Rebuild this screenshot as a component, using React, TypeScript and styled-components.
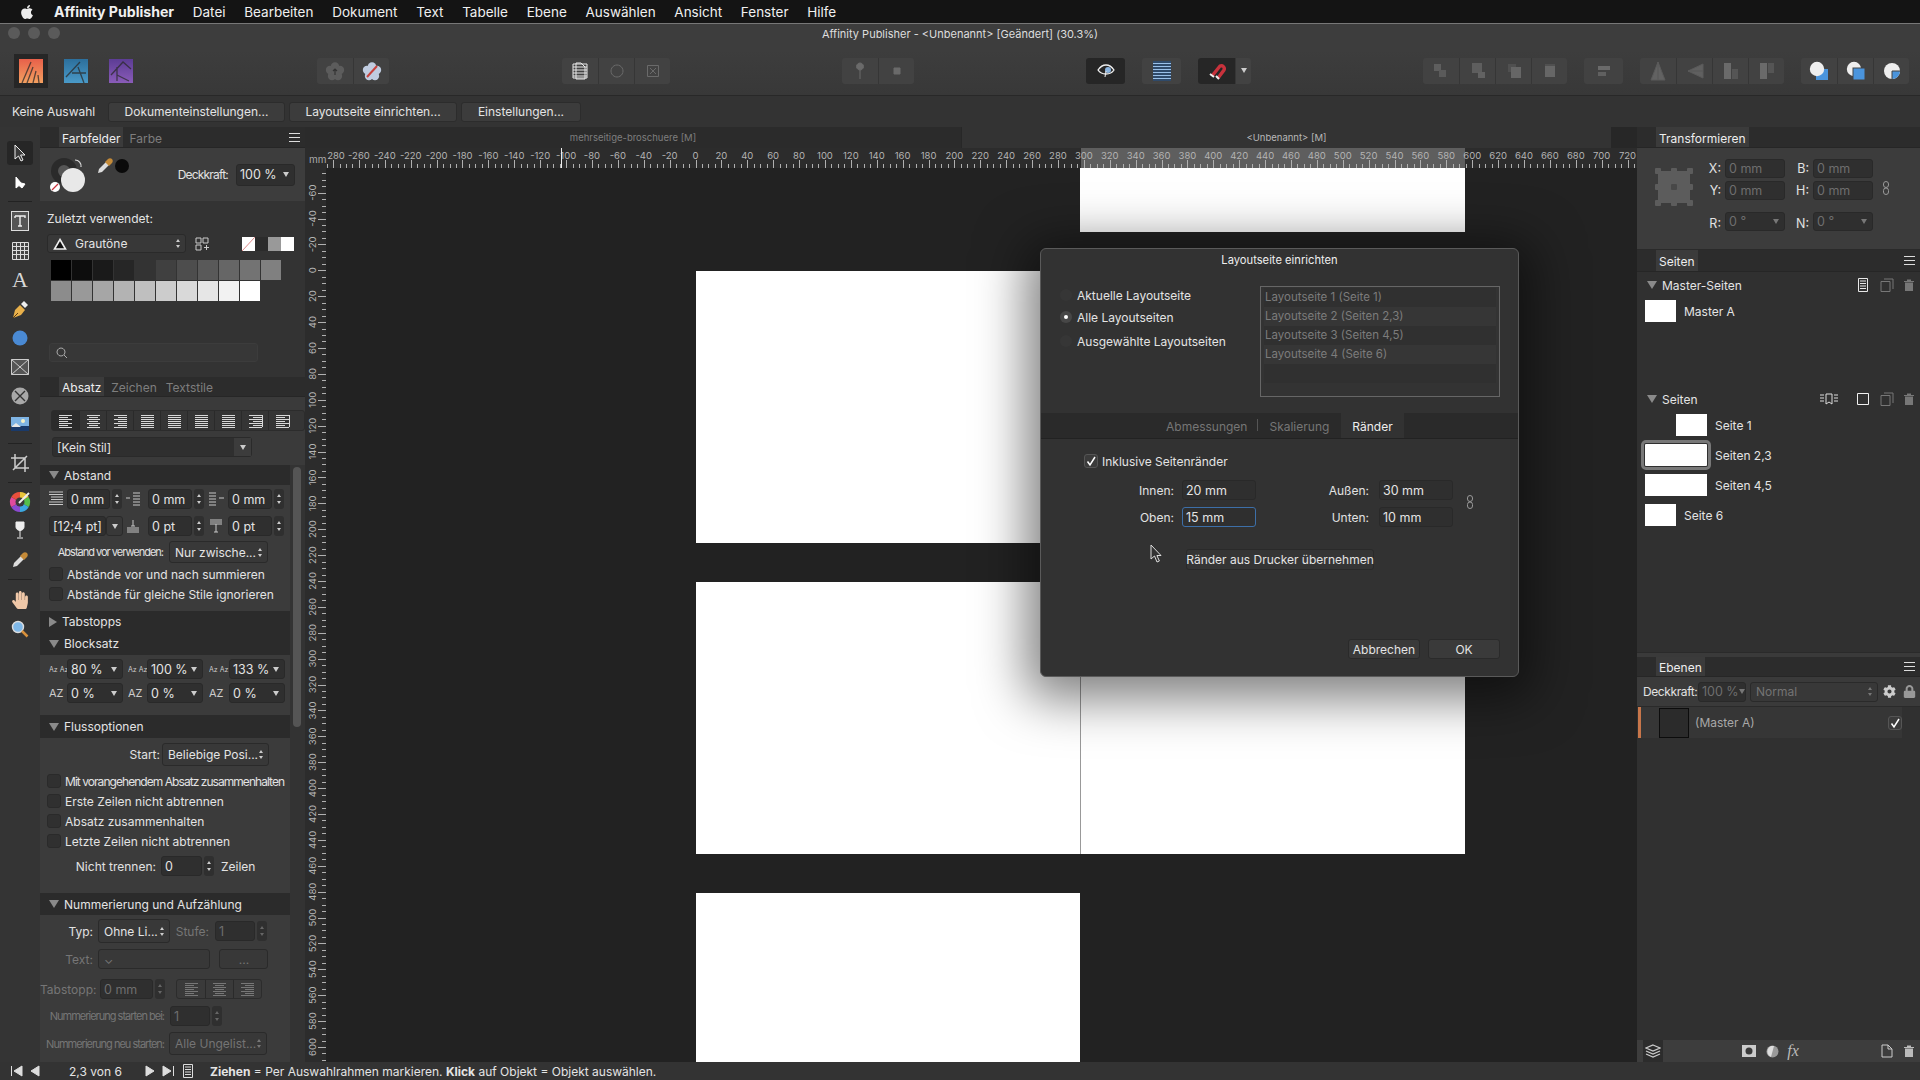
import React from 'react';
import styled, { createGlobalStyle, css } from 'styled-components';
import { FaHandPaper, FaCog, FaLock, FaApple } from 'react-icons/fa';

const GlobalStyle = createGlobalStyle`
  html, body { margin: 0; padding: 0; background: #222; }
  * { box-sizing: border-box; }
  body { font-family: Inter, "Liberation Sans", sans-serif; font-size: 12px; color: #e4e4e4; }
`;

const MM = 25.89 / 20;

const Screen = styled.div`
  position: relative;
  width: 1920px;
  height: 1080px;
  overflow: hidden;
  display: flex;
  flex-direction: column;
`;

const MenuBar = styled.div`
  height: 24px;
  flex: none;
  background: #141414;
  border-bottom: 1px solid #777;
  display: flex;
  align-items: center;
  padding-left: 19px;
  color: #f0f0f0;
`;

const MenuItem = styled.span<{ $bold?: boolean }>`
  margin-left: ${p => (p.$bold ? 19 : 18.7)}px;
  font-weight: ${p => (p.$bold ? 700 : 400)};
  font-size: ${p => (p.$bold ? 14.1 : 13.5)}px;
  white-space: nowrap;
`;

const TitleBar = styled.div`
  position: relative;
  height: 26px;
  flex: none;
  background: #3d3d3d;
  display: flex;
  align-items: center;
  justify-content: center;
  padding-bottom: 6px;
  font-size: 11px;
  color: #ddd;
`;

const Lights = styled.div`
  position: absolute;
  left: 8px;
  top: 3px;
  display: flex;
  gap: 8px;
`;

const Light = styled.span`
  width: 12px;
  height: 12px;
  border-radius: 50%;
  background: #5a5a5a;
`;

const Toolbar = styled.div`
  height: 46px;
  flex: none;
  background: linear-gradient(#3d3d3d, #383838);
  border-bottom: 1px solid #282828;
  display: flex;
  align-items: center;
  padding-left: 14px;
  padding-bottom: 4px;
`;

const AppBox = styled.div<{ $active?: boolean; $ml?: number }>`
  width: ${p => (p.$active ? 34 : 24)}px;
  height: 34px;
  margin-left: ${p => p.$ml ?? 0}px;
  background: ${p => (p.$active ? '#262626' : 'transparent')};
  display: flex;
  align-items: center;
  justify-content: center;
`;

const ToolGroup = styled.div<{ $ml: number }>`
  margin-left: ${p => p.$ml}px;
  display: flex;
  height: 26px;
  border-radius: 3px;
  overflow: hidden;
  background: #424242;
`;

const ToolBtn = styled.div<{ $w?: number; $dark?: boolean }>`
  width: ${p => p.$w ?? 36}px;
  height: 26px;
  display: flex;
  align-items: center;
  justify-content: center;
  background: ${p => (p.$dark ? '#262626' : 'transparent')};
  & + & { border-left: 1px solid #363636; }
`;

const ContextBar = styled.div`
  height: 31px;
  flex: none;
  background: #333;
  display: flex;
  align-items: center;
  padding-left: 12px;
`;

const ContextLabel = styled.span`
  width: 81px;
  flex: none;
  white-space: nowrap;
`;

const CtxButton = styled.div<{ $w: number; $ml?: number }>`
  width: ${p => p.$w}px;
  height: 20px;
  margin-left: ${p => p.$ml ?? 4}px;
  background: #3c3c3c;
  border: 1px solid #2c2c2c;
  border-radius: 3px;
  display: flex;
  align-items: center;
  justify-content: center;
  white-space: nowrap;
`;

const Main = styled.div`
  flex: 1;
  min-height: 0;
  display: flex;
`;

const ToolColumn = styled.div`
  width: 40px;
  flex: none;
  background: #343434;
  display: flex;
  flex-direction: column;
  align-items: center;
  padding-top: 14px;
`;

const ToolSlot = styled.div<{ $active?: boolean; $h?: number }>`
  width: 26px;
  height: ${p => p.$h ?? 29}px;
  flex: none;
  display: flex;
  align-items: center;
  justify-content: center;
  border-radius: 3px;
  background: ${p => (p.$active ? '#262626' : 'transparent')};
`;

const ToolSep = styled.div<{ $first?: boolean }>`
  width: 24px;
  height: 1px;
  flex: none;
  margin: ${p => (p.$first ? '0 0 4px' : '5px 0')};
  background: #222;
`;

const SerifA = styled.span`
  font-family: "Liberation Serif", serif;
  font-size: 22px;
  color: #d8d8d8;
`;

const LeftPanel = styled.div`
  width: 265px;
  flex: none;
  background: #333;
  display: flex;
  flex-direction: column;
`;

const TabRow = styled.div<{ $h?: number }>`
  height: ${p => p.$h ?? 21}px;
  flex: none;
  background: #2c2c2c;
  border-bottom: 1px solid #262626;
  display: flex;
  align-items: flex-end;
  padding-left: 19px;
  position: relative;
`;

const PanelTab = styled.div<{ $on?: boolean; $ml?: number }>`
  height: 100%;
  padding: 2px 3px 0;
  margin-left: ${p => p.$ml ?? 0}px;
  display: flex;
  align-items: center;
  background: ${p => (p.$on ? '#3b3b3b' : 'transparent')};
  color: ${p => (p.$on ? '#eee' : '#7e7e7e')};
  white-space: nowrap;
`;

const MenuGlyph = styled.div`
  margin-left: auto;
  margin-right: 5px;
  align-self: center;
  width: 11px;
  height: 9px;
  border-top: 1px solid #ddd;
  border-bottom: 1px solid #ddd;
  position: relative;
  &::before {
    content: '';
    position: absolute;
    left: 0;
    right: 0;
    top: 3px;
    height: 1px;
    background: #ddd;
  }
`;

const ColorHead = styled.div`
  height: 53px;
  flex: none;
  background: #3d3d3d;
  display: flex;
  align-items: center;
  padding: 0 10px 0 9px;
`;

const DropperSlot = styled.div`
  display: flex;
  align-items: center;
  margin: 0 0 17px 10px;
  gap: 1px;
`;

const PlainLabel = styled.span<{ $tight?: boolean; $dim?: boolean; $w?: number; $ml?: number }>`
  white-space: nowrap;
  margin-left: ${p => p.$ml ?? 0}px;
  color: ${p => (p.$dim ? '#767676' : '#e2e2e2')};
  ${p => p.$w && css`width: ${p.$w}px; flex: none; text-align: right;`}
  ${p => p.$tight && css`letter-spacing: -0.95px;`}
`;

const SqueezedLabel = styled(PlainLabel)`
  font-size: 11px;
  letter-spacing: -1px;
`;

const OpacityLabel = styled(PlainLabel)`
  margin-left: auto;
  letter-spacing: -0.8px;
`;

const Field = styled.div<{ $w: number; $h?: number; $ml?: number; $dim?: boolean; $focus?: boolean }>`
  width: ${p => p.$w}px;
  height: ${p => p.$h ?? 20}px;
  flex: none;
  margin-left: ${p => p.$ml ?? 0}px;
  padding: 0 3px;
  display: flex;
  align-items: center;
  background: #2f2f2f;
  border: 1px solid ${p => (p.$focus ? '#3d6fa8' : '#292929')};
  border-radius: 3px;
  color: ${p => (p.$dim ? '#6e6e6e' : '#e4e4e4')};
  font-size: 12.5px;
  white-space: nowrap;
  overflow: hidden;
`;

const DownMark = styled.i<{ $dim?: boolean; $flush?: boolean }>`
  margin-left: ${p => (p.$flush ? 0 : 'auto')};
  margin-right: ${p => (p.$flush ? 0 : 2)}px;
  flex: none;
  border-left: 3px solid transparent;
  border-right: 3px solid transparent;
  border-top: 5px solid ${p => (p.$dim ? '#777' : '#ccc')};
`;

const Stepper = styled.div<{ $dim?: boolean }>`
  width: 10px;
  height: 20px;
  flex: none;
  margin-left: 2px;
  background: #2f2f2f;
  border-radius: 3px;
  display: flex;
  flex-direction: column;
  align-items: center;
  justify-content: center;
  gap: 4px;
  &::before, &::after {
    content: '';
    border-left: 2.5px solid transparent;
    border-right: 2.5px solid transparent;
  }
  &::before { border-bottom: 3px solid ${p => (p.$dim ? '#666' : '#ccc')}; }
  &::after { border-top: 3px solid ${p => (p.$dim ? '#666' : '#ccc')}; }
`;

const Updown = styled.div<{ $dim?: boolean }>`
  margin-left: auto;
  margin-right: 1px;
  flex: none;
  display: flex;
  flex-direction: column;
  gap: 3px;
  &::before, &::after {
    content: '';
    border-left: 2.5px solid transparent;
    border-right: 2.5px solid transparent;
  }
  &::before { border-bottom: 3px solid ${p => (p.$dim ? '#777' : '#ccc')}; }
  &::after { border-top: 3px solid ${p => (p.$dim ? '#777' : '#ccc')}; }
`;

const Select = styled.div<{ $w: number; $h?: number; $ml?: number; $dim?: boolean; $center?: boolean }>`
  width: ${p => p.$w}px;
  height: ${p => p.$h ?? 22}px;
  flex: none;
  margin-left: ${p => p.$ml ?? 0}px;
  padding: 0 4px 0 5px;
  display: flex;
  align-items: center;
  justify-content: ${p => (p.$center ? 'center' : 'flex-start')};
  background: #383838;
  border: 1px solid #2a2a2a;
  border-radius: 3px;
  color: ${p => (p.$dim ? '#747474' : '#e4e4e4')};
  white-space: nowrap;
  overflow: hidden;
`;

const ColorBody = styled.div`
  height: 176px;
  flex: none;
  padding: 9px 0 0 7px;
  background: #333;
`;

const SwatchTools = styled.div`
  display: flex;
  align-items: center;
  margin-top: 8px;
`;

const SwatchName = styled.span`
  margin-left: 8px;
`;

const GridIcon = styled.div`
  display: flex;
  margin-left: 8px;
`;

const SwatchGrid = styled.div`
  margin: 7px 0 42px 4px;
  display: grid;
  grid-template-columns: repeat(11, 20px);
  grid-auto-rows: 20px;
  gap: 1px;
`;

const Swatch = styled.span<{ $c: string }>`
  background: ${p => p.$c};
`;

const MiniSwatches = styled.div`
  margin-left: 32px;
  display: flex;
  height: 14px;
`;

const MiniSwatch = styled.span<{ $c: string }>`
  width: 13px;
  background: ${p => p.$c};
`;

const Search = styled.div`
  width: 209px;
  height: 19px;
  margin-left: 2px;
  padding-left: 6px;
  background: #373737;
  border: 1px solid #3c3c3c;
  border-radius: 3px;
  display: flex;
  align-items: center;
`;

const AlignBody = styled.div`
  height: 68px;
  flex: none;
  background: #3a3a3a;
  padding: 13px 0 0 11px;
`;

const AlignGroup = styled.div<{ $ml?: number; $n: number; $w: number; $h?: number; $dim?: boolean }>`
  display: grid;
  grid-template-columns: repeat(${p => p.$n}, ${p => p.$w}px);
  height: ${p => p.$h ?? 21}px;
  margin-left: ${p => p.$ml ?? 0}px;
  background: ${p => (p.$dim ? '#3a3a3a' : '#353535')};
  border: 1px solid #2c2c2c;
  border-radius: 3px;
  & > div + div { border-left: 1px solid #2a2a2a; }
`;

const AlignCell = styled.div<{ $on?: boolean }>`
  display: flex;
  align-items: center;
  justify-content: center;
  background: ${p => (p.$on ? '#2b2b2b' : 'transparent')};
`;

const StyleSelect = styled.div`
  width: 200px;
  height: 20px;
  margin: 6px 0 0 1px;
  display: flex;
  background: #2f2f2f;
  border: 1px solid #2a2a2a;
  border-radius: 3px;
  align-items: center;
  padding-left: 4px;
`;

const StyleArrow = styled.div`
  margin-left: auto;
  width: 17px;
  height: 100%;
  background: #3c3c3c;
  display: flex;
  align-items: center;
  justify-content: center;
`;

const ScrollArea = styled.div`
  flex: 1;
  min-height: 0;
  display: flex;
`;

const ScrollContent = styled.div`
  width: 250px;
  flex: none;
`;

const ScrollTrack = styled.div`
  flex: 1;
  padding: 2px 4px 0 3px;
`;

const ScrollThumb = styled.div`
  height: 260px;
  border-radius: 4px;
  background: #555;
`;

const Header = styled.div<{ $h?: number }>`
  height: ${p => p.$h ?? 22}px;
  background: #2b2b2b;
  display: flex;
  align-items: center;
  padding-left: 9px;
  gap: 5px;
`;

const Tri = styled.i<{ $closed?: boolean }>`
  width: 0;
  height: 0;
  flex: none;
  ${p => (p.$closed
    ? css`border-top: 5px solid transparent; border-bottom: 5px solid transparent; border-left: 8px solid #8a8a8a;`
    : css`border-left: 5px solid transparent; border-right: 5px solid transparent; border-top: 8px solid #8a8a8a;`)}
`;

const Body = styled.div<{ $h: number; $pt: number }>`
  height: ${p => p.$h}px;
  padding-top: ${p => p.$pt}px;
  background: #3b3b3b;
`;

const Row = styled.div<{ $mt?: number; $h?: number; $pl?: number; $gap?: number }>`
  display: flex;
  align-items: center;
  height: ${p => p.$h ?? 20}px;
  margin-top: ${p => p.$mt ?? 0}px;
  padding-left: ${p => p.$pl ?? 0}px;
  gap: ${p => p.$gap ?? 0}px;
`;

const Cells = styled.div<{ $mt?: number; $cols: string }>`
  display: grid;
  grid-template-columns: ${p => p.$cols};
  margin-top: ${p => p.$mt ?? 0}px;
  padding-left: 9px;
  height: 20px;
`;

const Cell = styled.div`
  display: flex;
  align-items: center;
`;

const MetricGlyph = styled.span<{ $small?: boolean; $w: number }>`
  width: ${p => p.$w}px;
  flex: none;
  font-size: ${p => (p.$small ? 7 : 11)}px;
  color: #ccc;
  white-space: nowrap;
  overflow: hidden;
`;

const CheckRow = styled.div<{ $mt?: number; $pl: number }>`
  display: flex;
  align-items: center;
  gap: 4px;
  height: 14px;
  margin-top: ${p => p.$mt ?? 0}px;
  padding-left: ${p => p.$pl}px;
  white-space: nowrap;
`;

const CheckBox = styled.span<{ $on?: boolean; $push?: boolean }>`
  width: 14px;
  height: 14px;
  flex: none;
  border-radius: 3px;
  background: ${p => (p.$on ? '#3b3b3b' : '#303030')};
  border: 1px solid ${p => (p.$on ? '#555' : '#2a2a2a')};
  display: flex;
  align-items: center;
  justify-content: center;
  color: #fff;
  ${p => p.$push && css`margin-left: auto;`}
`;

const Center = styled.div`
  flex: 1;
  min-width: 0;
  display: flex;
  flex-direction: column;
`;

const DocTabs = styled.div`
  height: 21px;
  flex: none;
  display: flex;
  font-size: 9.5px;
  color: #8a8a8a;
  background: #272727;
`;

const DocTab = styled.div<{ $w: number; $on?: boolean }>`
  width: ${p => p.$w}px;
  flex: none;
  display: flex;
  align-items: center;
  justify-content: center;
  background: ${p => (p.$on ? '#333' : '#2b2b2b')};
  color: ${p => (p.$on ? '#b8b8b8' : '#7e7e7e')};
  margin-right: 1px;
`;

const RulerSvg = styled.svg`
  display: block;
  flex: none;
  background: #2c2c2c;
  font-family: Inter, "Liberation Sans", sans-serif;
`;

const CanvasRow = styled.div`
  flex: 1;
  min-height: 0;
  display: flex;
`;

const Canvas = styled.div`
  position: relative;
  flex: 1;
  overflow: hidden;
  background: #222;
`;

const Page = styled.div<{ $x: number; $y: number; $w: number; $h: number }>`
  position: absolute;
  left: ${p => p.$x}px;
  top: ${p => p.$y}px;
  width: ${p => p.$w}px;
  height: ${p => p.$h}px;
  background: #fff;
`;

const Fold = styled.div`
  position: absolute;
  left: 384px;
  top: 0;
  bottom: 0;
  width: 1px;
  background: #999;
`;

const RightPanel = styled.div`
  width: 283px;
  flex: none;
  background: #303030;
  display: flex;
  flex-direction: column;
`;

const TransformBody = styled.div`
  height: 102px;
  flex: none;
  background: #3c3c3c;
  border-bottom: 1px solid #2a2a2a;
  display: flex;
  padding: 11px 0 0 18px;
`;

const AnchorSlot = styled.div`
  margin-top: 9px;
`;

const TransformGrid = styled.div`
  margin-left: 13px;
  display: grid;
  grid-template-columns: 15px 60px 20px 60px;
  grid-template-rows: 19px 19px 28px;
  column-gap: 4px;
  row-gap: 3px;
  align-items: center;
  & > *:nth-child(n + 9) { align-self: end; }
`;

const TfLabel = styled.span`
  text-align: right;
  color: #e2e2e2;
  font-size: 12.5px;
`;

const ChainSlot = styled.div`
  margin: 22px 0 0 10px;
`;

const SectionHead = styled.div<{ $mt?: number }>`
  height: 22px;
  margin-top: ${p => p.$mt ?? 2}px;
  display: flex;
  align-items: center;
  padding-left: 10px;
  gap: 5px;
`;

const HeadIcons = styled.div`
  margin-left: auto;
  display: flex;
  align-items: center;
  gap: 8px;
  padding-right: 4px;
`;

const IconGap = styled.span`
  display: flex;
  margin-right: 2px;
`;

const BookmarkGap = styled.span`
  display: flex;
  margin-right: 10px;
`;

const PageRow = styled.div<{ $mt?: number }>`
  height: 22px;
  display: flex;
  align-items: center;
  padding-left: 8px;
  margin-top: ${p => p.$mt ?? 8}px;
`;

const Thumb = styled.div<{ $wide?: boolean; $sel?: boolean; $ml?: number }>`
  width: ${p => (p.$wide ? 62 : 31)}px;
  height: 22px;
  flex: none;
  background: #fff;
  margin-left: ${p => p.$ml ?? 0}px;
  margin-right: 8px;
  ${p => p.$sel && css`outline: 3px solid #787878; outline-offset: 1px; border-radius: 1px;`}
`;

const PagesBody = styled.div`
  height: 380px;
  flex: none;
  background: #303030;
`;

const Divider = styled.div`
  height: 5px;
  flex: none;
  background: #3a3a3a;
  border-top: 1px solid #2a2a2a;
`;

const LayerControls = styled.div`
  height: 30px;
  flex: none;
  background: #3a3a3a;
  border-bottom: 1px solid #2a2a2a;
  display: flex;
  align-items: center;
  padding-left: 6px;
`;

const LayerLabel = styled(PlainLabel)`
  width: 55px;
  flex: none;
  letter-spacing: -0.4px;
`;

const LayerRow = styled.div`
  height: 31px;
  flex: none;
  background: #363636;
  display: flex;
  align-items: center;
  border-left: 3px solid #c8764a;
  margin-left: 1px;
  padding-left: 18px;
  color: #a8a8a8;
  margin-right: 18px;
`;

const LayerThumb = styled.div`
  width: 30px;
  height: 30px;
  background: #2b2b2b;
  border: 1px solid #0c0c0c;
  margin-right: 6px;
`;

const LayersSpace = styled.div`
  flex: 1;
`;

const LayersFoot = styled.div`
  height: 22px;
  flex: none;
  background: #3d3d3d;
  display: flex;
  align-items: center;
  padding-left: 6px;
`;

const FootSlot = styled.div<{ $ml?: number; $on?: boolean }>`
  width: 20px;
  height: 22px;
  flex: none;
  margin-left: ${p => p.$ml ?? 0}px;
  display: flex;
  align-items: center;
  justify-content: center;
  background: ${p => (p.$on ? '#2c2c2c' : 'transparent')};
`;

const FxText = styled.span`
  font-family: "Liberation Serif", serif;
  font-style: italic;
  font-size: 16px;
  color: #bbb;
`;

const StatusBar = styled.div`
  height: 18px;
  flex: none;
  background: #333;
  display: flex;
  align-items: center;
  padding-left: 10px;
`;

const StatusIcon = styled.span<{ $ml?: number }>`
  display: flex;
  margin-left: ${p => p.$ml ?? 0}px;
`;

const StatusPage = styled.span`
  margin: 0 14px 0 27px;
  width: 60px;
  white-space: nowrap;
`;

const StatusHint = styled.span`
  margin-left: 15px;
  white-space: nowrap;
  & b { font-weight: 700; }
`;

const Dialog = styled.div`
  position: absolute;
  left: 1040px;
  top: 248px;
  width: 479px;
  height: 429px;
  background: #323232;
  border: 1px solid #5a5a5a;
  border-radius: 6px;
  box-shadow: 0 8px 50px 14px rgba(0, 0, 0, 0.5);
  display: flex;
  flex-direction: column;
`;

const DialogTitle = styled.div`
  height: 21px;
  flex: none;
  display: flex;
  align-items: center;
  justify-content: center;
  font-size: 11.2px;
  color: #eee;
`;

const ScopeRow = styled.div`
  height: 143px;
  flex: none;
  display: flex;
  padding: 16px 0 0 19px;
`;

const RadioColumn = styled.div`
  width: 200px;
  flex: none;
  padding-top: 1px;
`;

const RadioRow = styled.div<{ $mt?: number }>`
  display: flex;
  align-items: center;
  gap: 5px;
  height: 16px;
  margin-top: ${p => p.$mt ?? 0}px;
`;

const Radio = styled.span<{ $on?: boolean }>`
  width: 12px;
  height: 12px;
  border-radius: 50%;
  background: ${p => (p.$on ? '#474747' : '#363636')};
  display: flex;
  align-items: center;
  justify-content: center;
  &::after {
    content: '';
    width: 4px;
    height: 4px;
    border-radius: 50%;
    background: ${p => (p.$on ? '#fff' : 'transparent')};
  }
`;

const PageList = styled.div`
  width: 240px;
  height: 111px;
  border: 1px solid #666;
  padding: 1px 3px;
  background: #333;
`;

const PageListRow = styled.div<{ $odd?: boolean }>`
  height: 19px;
  line-height: 19px;
  font-size: 11.5px;
  color: #7c7c7c;
  padding-left: 1px;
  background: ${p => (p.$odd ? '#303030' : '#363636')};
`;

const DialogTabs = styled.div`
  height: 26px;
  flex: none;
  background: #2a2a2a;
  border-bottom: 1px solid #222;
  display: flex;
  align-items: stretch;
  padding-left: 114px;
`;

const DialogTab = styled.div<{ $on?: boolean; $sep?: boolean; $ml?: number }>`
  display: flex;
  align-items: center;
  padding: 1px 11px 0;
  margin-left: ${p => p.$ml ?? 0}px;
  color: ${p => (p.$on ? '#eee' : '#767676')};
  background: ${p => (p.$on ? '#323232' : 'transparent')};
  ${p => p.$sep && css`
    position: relative;
    &::after {
      content: '';
      position: absolute;
      right: 0;
      top: 6px;
      bottom: 7px;
      width: 1px;
      background: #555;
    }
  `}
`;

const DialogBody = styled.div`
  flex: 1;
  position: relative;
  padding: 15px 0 0 43px;
`;

const FormRow = styled.div<{ $mt: number }>`
  display: flex;
  align-items: center;
  margin-top: ${p => p.$mt}px;
  height: 20px;
`;

const ChainFloat = styled.div`
  position: absolute;
  left: 426px;
  top: 56px;
`;

const WideButton = styled.div`
  width: 188px;
  height: 21px;
  margin: 22px 0 0 102px;
  background: #353535;
  border: 1px solid #2a2a2a;
  border-radius: 3px;
  display: flex;
  align-items: center;
  justify-content: center;
  white-space: nowrap;
`;

const DialogFoot = styled.div`
  display: flex;
  justify-content: flex-end;
  gap: 8px;
  margin-top: 69px;
  margin-right: 18px;
`;

const DialogButton = styled.div`
  width: 72px;
  height: 20px;
  background: #3a3a3a;
  border: 1px solid #2a2a2a;
  border-radius: 3px;
  display: flex;
  align-items: center;
  justify-content: center;
`;

const CursorFloat = styled.div`
  position: absolute;
  left: 109px;
  top: 105px;
`;

/* ---- drawings ---- */

const AppIcon = ({ c1, c2, lines }: { c1: string; c2: string; lines: string }) => (
  <svg width="24" height="24" viewBox="0 0 24 24">
    <defs>
      <linearGradient id={`g${c1.slice(1)}`} x1="0" y1="0" x2="0" y2="1">
        <stop offset="0" stopColor={c1} />
        <stop offset="1" stopColor={c2} />
      </linearGradient>
    </defs>
    <rect width="24" height="24" fill={`url(#g${c1.slice(1)})`} />
    <path d={lines} stroke="#2a2a2a" strokeWidth="1.3" fill="none" opacity=".75" />
  </svg>
);

const Flower = ({ fill, slash, arrow }: { fill: string; slash?: boolean; arrow?: boolean }) => (
  <svg width="20" height="20" viewBox="0 0 20 20">
    <g fill={fill}>
      <circle cx="10" cy="5.5" r="4.2" />
      <circle cx="15" cy="9" r="4.2" />
      <circle cx="13" cy="15" r="4.2" />
      <circle cx="7" cy="15" r="4.2" />
      <circle cx="5" cy="9" r="4.2" />
      <circle cx="10" cy="10" r="4" />
    </g>
    {slash && <path d="M5 16L15 5" stroke="#c8423c" strokeWidth="2" />}
    {arrow && <path d="M10 14V8M8 10l2-2 2 2" stroke="#333" strokeWidth="1.2" fill="none" />}
  </svg>
);

const Gi = ({ d, w = 16, h = 16, c = '#ddd', sw = 1, fill = 'none' }: { d: string; w?: number; h?: number; c?: string; sw?: number; fill?: string }) => (
  <svg width={w} height={h} viewBox={`0 0 ${w} ${h}`}>
    <path d={d} stroke={c} strokeWidth={sw} fill={fill} />
  </svg>
);

const Blocks = ({ parts }: { parts: [number, number, number, number, string][] }) => (
  <svg width="22" height="20" viewBox="0 0 22 20">
    {parts.map((p, i) => <rect key={i} x={p[0]} y={p[1]} width={p[2]} height={p[3]} fill={p[4]} />)}
  </svg>
);

const lines = (n: number, kind: string) => {
  const out: string[] = [];
  for (let i = 0; i < n; i++) {
    const long = kind === 'just' || i % 2 === 0;
    const w = long ? 13 : 9;
    const x = kind === 'left' ? 1 : kind === 'right' ? 14 - w : kind === 'center' ? 7.5 - w / 2 : 1;
    out.push(`M${x} ${1.5 + i * 2}h${w}`);
  }
  return out.join('');
};

const AlignIcon = ({ kind, c = '#d8d8d8' }: { kind: string; c?: string }) => (
  <Gi w={15} h={14} d={lines(7, kind)} c={c} />
);

const SpaceIcon = ({ d }: { d: string }) => <Gi w={16} h={16} d={d} c="#c8c8c8" />;

const Chain = () => (
  <svg width="6" height="14" viewBox="0 0 6 14">
    <rect x=".5" y=".5" width="5" height="6" rx="2.5" fill="none" stroke="#999" />
    <rect x=".5" y="7" width="5" height="6.5" rx="2.5" fill="none" stroke="#999" />
  </svg>
);

const Check = () => (
  <svg width="12" height="12" viewBox="0 0 12 12">
    <path d="M2.5 6.5L5 10L10 2" stroke="#fff" strokeWidth="1.5" fill="none" />
  </svg>
);

const Trash = ({ c = '#777' }: { c?: string }) => (
  <svg width="14" height="14" viewBox="0 0 14 14">
    <path d="M2 3h10v1H2zM5 1.5h4V3H5zM3 4.5h8V13H3z" fill={c} />
  </svg>
);

const Dropper = () => (
  <svg width="18" height="18" viewBox="0 0 18 18">
    <path d="M2 16l1-4 7-7 3 3-7 7z" fill="#ddd" />
    <path d="M10 4l2-2c1-1 3-1 4 0s1 3 0 4l-2 2-1 1-4-4z" fill="#c48a38" />
  </svg>
);

const AnchorGrid = () => (
  <svg width="38" height="38" viewBox="0 0 38 38">
    <rect x="3" y="3" width="32" height="32" fill="#5c5c5c" />
    {[3, 19, 35].flatMap(x => [3, 19, 35].map(y => (
      <rect key={`${x}-${y}`} x={x - 3} y={y - 3} width="6" height="6" rx="1" fill={x === 19 && y === 19 ? '#484848' : '#5c5c5c'} />
    )))}
  </svg>
);

const ColorWheel = () => (
  <svg width="22" height="22" viewBox="0 0 22 22">
    <path d="M11 1a10 10 0 0 1 8.7 5L11 11z" fill="#e8c43c" />
    <path d="M19.7 6a10 10 0 0 1 0 10L11 11z" fill="#55c04a" />
    <path d="M19.7 16A10 10 0 0 1 11 21V11z" fill="#3ca8e0" />
    <path d="M11 21a10 10 0 0 1-8.7-5L11 11z" fill="#8a4ad0" />
    <path d="M2.3 16a10 10 0 0 1 0-10L11 11z" fill="#e04a9c" />
    <path d="M2.3 6A10 10 0 0 1 11 1v10z" fill="#e8503c" />
    <circle cx="11" cy="11" r="4.5" fill="#3a3a3a" />
    <path d="M10 12L20 2" stroke="#eee" strokeWidth="2" />
  </svg>
);

/* ---- data ---- */

const menus = ['Datei', 'Bearbeiten', 'Dokument', 'Text', 'Tabelle', 'Ebene', 'Auswählen', 'Ansicht', 'Fenster', 'Hilfe'];

const greys = ['#000', '#0d0d0d', '#1a1a1a', '#262626', '#333', '#404040', '#4d4d4d', '#595959', '#666', '#737373', '#808080',
  '#8c8c8c', '#999', '#a6a6a6', '#b3b3b3', '#bfbfbf', '#ccc', '#d9d9d9', '#e6e6e6', '#f2f2f2', '#fff'];

const hLabels: number[] = [];
for (let u = -260; u <= 720; u += 20) hLabels.push(u);
const vLabels: number[] = [];
for (let u = -60; u <= 600; u += 20) vLabels.push(u);

const TopRuler = () => {
  const zero = 390.5;
  let ticks = '';
  for (let u = -285; u <= 730; u += 5) {
    const x = Math.round(zero + u * MM) + 0.5;
    ticks += `M${x} 20v${u % 20 === 0 ? -8 : -4}`;
  }
  return (
    <RulerSvg width="1332" height="20" viewBox="0 0 1332 20">
      <rect x="776" width="384" height="20" fill="#5e5e5e" />
      <path d={ticks} stroke="#b0b0b0" strokeWidth="1" />
      <rect width="21" height="20" fill="#2c2c2c" />
      <text x="4" y="15" fontSize="10" fill="#aaa">mm</text>
      <text x="31" y="11" fontSize="9.5" textAnchor="middle" fill="#b4b4b4">280</text>
      {hLabels.map(u => (
        <text key={u} x={zero + u * MM} y="11" fontSize="9.5" textAnchor="middle" fill="#b4b4b4">{u}</text>
      ))}
      <path d="M256.5 0v20" stroke="#eee" />
    </RulerSvg>
  );
};

const LeftRuler = () => {
  const zero = 102.3;
  let ticks = '';
  for (let u = -100; u <= 640; u += 5) {
    const y = Math.round(zero + u * MM) + 0.5;
    ticks += `M21 ${y}h${u % 20 === 0 ? -8 : -4}`;
  }
  return (
    <RulerSvg width="21" height="894" viewBox="0 0 21 894">
      <path d={ticks} stroke="#b0b0b0" strokeWidth="1" />
      {vLabels.map(u => (
        <text key={u} transform={`translate(11 ${zero + u * MM}) rotate(-90)`} fontSize="9.5" textAnchor="middle" fill="#b4b4b4">{u}</text>
      ))}
    </RulerSvg>
  );
};

const ToolIcons = () => (
  <ToolColumn>
    <ToolSlot $active $h={24}><Gi w={14} h={18} d="M2 1v14l3.5-3 2.5 5 2-1-2.4-5H12z" c="#eee" fill="#3a3a3a" /></ToolSlot>
    <ToolSlot $h={36}><Gi w={12} h={14} d="M2 1v11l3-2.5L8 12l3-4-4-1z" c="#fff" fill="#fff" /></ToolSlot>
    <ToolSep $first />
    <ToolSlot $h={30}>
      <svg width="18" height="20" viewBox="0 0 18 20">
        <rect x=".5" y=".5" width="17" height="19" fill="#555" stroke="#ddd" />
        <path d="M4 5h10v2M4 7V5M9 5v10M7 15h4" stroke="#eee" strokeWidth="1.4" fill="none" />
      </svg>
    </ToolSlot>
    <ToolSlot>
      <svg width="17" height="18" viewBox="0 0 17 18">
        <path d="M.5.5h16v17H.5zM.5 4.5h16M.5 8.5h16M.5 12.5h16M4.5.5v17M8.5.5v17M12.5.5v17" stroke="#ddd" fill="#444" />
      </svg>
    </ToolSlot>
    <ToolSlot $h={30}><SerifA>A</SerifA></ToolSlot>
    <ToolSlot $h={28}>
      <svg width="18" height="20" viewBox="0 0 18 20">
        <path d="M2 19l2-8 5-5 5 5-4 5z" fill="#e8b04a" />
        <path d="M10 5l3-3 4 4-3 3z" fill="#eee" />
        <path d="M2 19l5-5" stroke="#5a3a10" />
      </svg>
    </ToolSlot>
    <ToolSlot $h={29}>
      <svg width="18" height="18" viewBox="0 0 18 18"><circle cx="9" cy="9" r="7.5" fill="#4a8ad4" /></svg>
    </ToolSlot>
    <ToolSlot $h={29}><Gi w={18} h={16} d="M.5.5h17v15H.5zM.5.5l17 15M17.5.5L.5 15.5" c="#ccc" fill="#555" /></ToolSlot>
    <ToolSlot $h={29}>
      <svg width="18" height="18" viewBox="0 0 18 18">
        <circle cx="9" cy="9" r="8.5" fill="#a8a8a8" />
        <path d="M4 4l10 10M14 4L4 14" stroke="#333" strokeWidth="1.4" />
      </svg>
    </ToolSlot>
    <ToolSlot $h={28}>
      <svg width="18" height="14" viewBox="0 0 18 14">
        <rect width="18" height="14" fill="#7fb4e4" />
        <rect y="9" width="18" height="5" fill="#1a3a6a" />
        <circle cx="12" cy="4" r="2" fill="#f4f0c8" />
        <path d="M0 10l5-4 5 4z" fill="#e8e8e8" />
      </svg>
    </ToolSlot>
    <ToolSep />
    <ToolSlot $h={28}><Gi w={18} h={18} d="M4 0v14h14M0 4h14v14M2 16L16 2" c="#ccc" sw={1.5} /></ToolSlot>
    <ToolSep />
    <ToolSlot $h={27}><ColorWheel /></ToolSlot>
    <ToolSlot $h={30}><Gi w={10} h={18} d="M1 1h8v5c0 2-2 3.5-4 3.5S1 8 1 6zM5 9.5V16M2 17h6" c="#eee" fill="#eee" /></ToolSlot>
    <ToolSlot $h={29}><Dropper /></ToolSlot>
    <ToolSep />
    <ToolSlot $h={29}><FaHandPaper size={18} color="#f0c8a8" /></ToolSlot>
    <ToolSlot $h={29}>
      <svg width="18" height="18" viewBox="0 0 18 18">
        <circle cx="7" cy="7" r="5.5" fill="#7fb8e8" stroke="#ddd" strokeWidth="1.4" />
        <path d="M11 11l5.5 5.5" stroke="#d8913c" strokeWidth="2.5" />
      </svg>
    </ToolSlot>
  </ToolColumn>
);

const TopBar = () => (
  <Toolbar>
    <AppBox $active>
      <AppIcon c1="#e8604a" c2="#f4a060" lines="M3 24L12 3M8 24L14 8M14 24L17 12M20 24L19 16" />
    </AppBox>
    <AppBox $ml={16}><AppIcon c1="#2c6f9c" c2="#4a9ac8" lines="M2 18L16 3M8 14h14M14 8l6 16" /></AppBox>
    <AppBox $ml={21}><AppIcon c1="#5c3c94" c2="#8a5cb8" lines="M2 16L14 3L22 10M8 22L8 8M8 16L20 22" /></AppBox>
    <ToolGroup $ml={184}>
      <ToolBtn><Flower fill="#5c5c5c" arrow /></ToolBtn>
      <ToolBtn><Flower fill="#c0cce0" slash /></ToolBtn>
    </ToolGroup>
    <ToolGroup $ml={173}>
      <ToolBtn><Gi w={16} h={18} d="M1 2h14v14H1zM1 5h14M1 8h14M1 11h14M1 14h14M4 1h5l4 4v12H4z" c="#e8e8e8" /></ToolBtn>
      <ToolBtn><Gi w={14} h={14} d="M7 1a6 6 0 1 0 .01 0z" c="#6a6a6a" /></ToolBtn>
      <ToolBtn><Gi w={12} h={12} d="M.5.5h11v11H.5zM3 3l6 6M9 3l-6 6" c="#6a6a6a" /></ToolBtn>
    </ToolGroup>
    <ToolGroup $ml={172}>
      <ToolBtn><Gi w={10} h={18} d="M5 1a3.5 3.5 0 1 0 .01 0zM5 8v9" c="#6a6a6a" fill="#6a6a6a" /></ToolBtn>
      <ToolBtn><Gi w={8} h={8} d="M1 1h6v6H1z" c="#6a6a6a" fill="#6a6a6a" /></ToolBtn>
    </ToolGroup>
    <ToolGroup $ml={172}>
      <ToolBtn $w={39} $dark>
        <svg width="18" height="14" viewBox="0 0 18 14">
          <path d="M1 6c2-3 5-5 8-5s6 2 8 5c-2 3-5 4-8 4S3 9 1 6z" fill="none" stroke="#eee" strokeWidth="1.3" />
          <circle cx="11" cy="6" r="3" fill="#8ab4e0" />
          <path d="M9 7l-1 6" stroke="#eee" />
        </svg>
      </ToolBtn>
    </ToolGroup>
    <ToolGroup $ml={17}>
      <ToolBtn $w={39}>
        <svg width="18" height="20" viewBox="0 0 18 20">
          <rect width="18" height="20" fill="#2f4a6a" />
          <path d="M0 2.5h18M0 5.5h18M0 8.5h18M0 11.5h18M0 14.5h18M0 17.5h18" stroke="#9ac0e8" />
        </svg>
      </ToolBtn>
    </ToolGroup>
    <ToolGroup $ml={17}>
      <ToolBtn $w={37} $dark>
        <svg width="20" height="20" viewBox="0 0 20 20">
          <path d="M5 15L13 5a3 3 0 0 1 4 4l-6 8" fill="none" stroke="#c8323c" strokeWidth="3.4" />
          <path d="M3 13l4 3M9 15l3 3" stroke="#eee" strokeWidth="2" />
        </svg>
      </ToolBtn>
      <ToolBtn $w={16}><DownMark $flush /></ToolBtn>
    </ToolGroup>
    <ToolGroup $ml={172}>
      <ToolBtn><Blocks parts={[[4, 3, 7, 7, '#5e5e5e'], [9, 9, 7, 7, '#5a5a5a']]} /></ToolBtn>
      <ToolBtn><Blocks parts={[[5, 2, 10, 10, '#5e5e5e'], [11, 11, 7, 6, '#626262']]} /></ToolBtn>
      <ToolBtn><Blocks parts={[[5, 3, 8, 8, '#505050'], [8, 6, 10, 11, '#666']]} /></ToolBtn>
      <ToolBtn><Blocks parts={[[6, 3, 10, 3, '#505050'], [6, 5, 10, 11, '#666']]} /></ToolBtn>
    </ToolGroup>
    <ToolGroup $ml={17}>
      <ToolBtn $w={39}><Blocks parts={[[5, 5, 12, 4, '#6a6a6a'], [5, 11, 8, 4, '#606060']]} /></ToolBtn>
    </ToolGroup>
    <ToolGroup $ml={17}>
      <ToolBtn><Gi w={16} h={20} d="M8 1v18H1zM8 1l7 18H8z" c="#5a5a5a" fill="#626262" /></ToolBtn>
      <ToolBtn><Gi w={18} h={16} d="M17 1v7H2zM17 8v7L2 8z" c="#5a5a5a" fill="#606060" /></ToolBtn>
      <ToolBtn><Blocks parts={[[4, 2, 7, 16, '#6a6a6a'], [12, 8, 6, 10, '#555']]} /></ToolBtn>
      <ToolBtn><Blocks parts={[[4, 2, 7, 16, '#6a6a6a'], [12, 2, 6, 10, '#555']]} /></ToolBtn>
    </ToolGroup>
    <ToolGroup $ml={17}>
      <ToolBtn>
        <svg width="20" height="20" viewBox="0 0 20 20">
          <rect x="7" y="8" width="12" height="11" fill="#4a94dc" />
          <circle cx="8" cy="8" r="7.2" fill="#eee" />
        </svg>
      </ToolBtn>
      <ToolBtn>
        <svg width="20" height="20" viewBox="0 0 20 20">
          <circle cx="8" cy="8" r="7.2" fill="#eee" />
          <rect x="7" y="7" width="12" height="12" fill="#4a94dc" stroke="#424242" />
        </svg>
      </ToolBtn>
      <ToolBtn>
        <svg width="20" height="20" viewBox="0 0 20 20">
          <circle cx="10" cy="10" r="8" fill="#eee" />
          <path d="M10 10h8a8 8 0 0 1-8 8z" fill="#4a94dc" />
          <path d="M10 19v-9h9" stroke="#424242" fill="none" />
        </svg>
      </ToolBtn>
    </ToolGroup>
  </Toolbar>
);

const ColorWidget = () => (
  <svg width="37" height="36" viewBox="0 0 37 36">
    <circle cx="15" cy="14" r="13" fill="#2a2a2a" />
    <circle cx="15" cy="14" r="6" fill="#555" />
    <circle cx="24" cy="23" r="12" fill="#e8e8e8" />
    <circle cx="6" cy="30" r="5" fill="#fff" />
    <path d="M3 33l6-6" stroke="#c8323c" strokeWidth="1.3" />
    <path d="M26 3a6 6 0 0 1 6 7" stroke="#ddd" fill="none" strokeWidth="1.2" />
  </svg>
);

const SpacingSection = () => (
  <>
    <Header $h={20}><Tri />Abstand</Header>
    <Body $h={126} $pt={4}>
      <Cells $cols="77px 83px 75px">
        <Cell><SpaceIcon d="M0 1h14M0 3.5h14M2 6h12M2 8.5h12M0 11h14M0 13.5h14" /><Field $w={43} $ml={2}>0 mm</Field><Stepper /></Cell>
        <Cell><SpaceIcon d="M0 7h4M7 2h7M7 5h7M7 8h7M7 11h7M7 14h7" /><Field $w={44} $ml={6}>0 mm</Field><Stepper /></Cell>
        <Cell><SpaceIcon d="M0 2h7M0 5h7M0 8h7M0 11h7M0 14h7M10 7h5" /><Field $w={44} $ml={3}>0 mm</Field><Stepper /></Cell>
      </Cells>
      <Cells $mt={7} $cols="77px 83px 75px">
        <Cell><Field $w={57}>[12;4 pt]</Field><Select $w={17} $h={20}><DownMark $flush /></Select></Cell>
        <Cell><SpaceIcon d="M7 2v6M5 8h4M1 10h12M1 12h12M1 14h12" /><Field $w={44} $ml={6}>0 pt</Field><Stepper /></Cell>
        <Cell><SpaceIcon d="M1 2h12M1 4h12M1 6h12M7 6v8M5 14h4" /><Field $w={44} $ml={3}>0 pt</Field><Stepper /></Cell>
      </Cells>
      <Row $mt={5} $h={22}>
        <SqueezedLabel $w={123}>Abstand vor verwenden:</SqueezedLabel>
        <Select $w={99} $ml={6}>Nur zwische...<Updown /></Select>
      </Row>
      <CheckRow $mt={4} $pl={9}><CheckBox />Abstände vor und nach summieren</CheckRow>
      <CheckRow $mt={6} $pl={9}><CheckBox />Abstände für gleiche Stile ignorieren</CheckRow>
    </Body>
    <Header $h={21}><Tri $closed />Tabstopps</Header>
    <Header $h={23}><Tri />Blocksatz</Header>
  </>
);

const JustifySection = () => (
  <Body $h={60} $pt={4}>
    <Cells $cols="79px 81px 76px">
      <Cell><MetricGlyph $small $w={18}>Az Az</MetricGlyph><Field $w={56}>80 %<DownMark /></Field></Cell>
      <Cell><MetricGlyph $small $w={19}>Az Az</MetricGlyph><Field $w={56}>100 %<DownMark /></Field></Cell>
      <Cell><MetricGlyph $small $w={20}>Az Az</MetricGlyph><Field $w={56}>133 %<DownMark /></Field></Cell>
    </Cells>
    <Cells $mt={4} $cols="79px 81px 76px">
      <Cell><MetricGlyph $w={18}>AZ</MetricGlyph><Field $w={56}>0 %<DownMark /></Field></Cell>
      <Cell><MetricGlyph $w={19}>AZ</MetricGlyph><Field $w={56}>0 %<DownMark /></Field></Cell>
      <Cell><MetricGlyph $w={20}>AZ</MetricGlyph><Field $w={56}>0 %<DownMark /></Field></Cell>
    </Cells>
  </Body>
);

const FlowSection = () => (
  <>
    <Header $h={23}><Tri />Flussoptionen</Header>
    <Body $h={155} $pt={5}>
      <Row $h={23} $gap={2}>
        <PlainLabel $w={120}>Start:</PlainLabel>
        <Select $w={107} $h={23}>Beliebige Posi...<Updown /></Select>
      </Row>
      <CheckRow $mt={8} $pl={7}><CheckBox /><PlainLabel $tight>Mit vorangehendem Absatz zusammenhalten</PlainLabel></CheckRow>
      <CheckRow $mt={6} $pl={7}><CheckBox />Erste Zeilen nicht abtrennen</CheckRow>
      <CheckRow $mt={6} $pl={7}><CheckBox />Absatz zusammenhalten</CheckRow>
      <CheckRow $mt={6} $pl={7}><CheckBox />Letzte Zeilen nicht abtrennen</CheckRow>
      <Row $mt={8}>
        <PlainLabel $w={116}>Nicht trennen:</PlainLabel>
        <Field $w={41} $ml={5}>0</Field>
        <Stepper />
        <PlainLabel $ml={7}>Zeilen</PlainLabel>
      </Row>
    </Body>
  </>
);

const NumberingSection = () => (
  <>
    <Header $h={22}><Tri />Nummerierung und Aufzählung</Header>
    <Body $h={147} $pt={4}>
      <Row $h={24}>
        <PlainLabel $w={53}>Typ:</PlainLabel>
        <Select $w={72} $h={24} $ml={5}>Ohne Li...<Updown /></Select>
        <PlainLabel $dim $w={39}>Stufe:</PlainLabel>
        <Field $dim $w={40} $ml={6}>1</Field>
        <Stepper $dim />
      </Row>
      <Row $mt={6}>
        <PlainLabel $dim $w={53}>Text:</PlainLabel>
        <Select $dim $w={112} $h={20} $ml={5}>⌄</Select>
        <Select $dim $center $w={49} $h={20} $ml={9}>...</Select>
      </Row>
      <Row $mt={10}>
        <PlainLabel $dim $w={55}>Tabstopp:</PlainLabel>
        <Field $dim $w={53} $ml={5}>0 mm</Field>
        <Stepper $dim />
        <AlignGroup $dim $ml={11} $n={3} $w={28} $h={20}>
          <AlignCell><AlignIcon kind="left" c="#777" /></AlignCell>
          <AlignCell><AlignIcon kind="center" c="#777" /></AlignCell>
          <AlignCell><AlignIcon kind="right" c="#777" /></AlignCell>
        </AlignGroup>
      </Row>
      <Row $mt={7}>
        <SqueezedLabel $dim $w={124}>Nummerierung starten bei:</SqueezedLabel>
        <Field $dim $w={40} $ml={6}>1</Field>
        <Stepper $dim />
      </Row>
      <Row $mt={6} $h={23}>
        <SqueezedLabel $dim $w={124}>Nummerierung neu starten:</SqueezedLabel>
        <Select $dim $w={98} $h={23} $ml={5}>Alle Ungelist...<Updown $dim /></Select>
      </Row>
    </Body>
  </>
);

const Left = () => (
  <LeftPanel>
    <TabRow>
      <PanelTab $on>Farbfelder</PanelTab>
      <PanelTab $ml={3}>Farbe</PanelTab>
      <MenuGlyph />
    </TabRow>
    <ColorHead>
      <ColorWidget />
      <DropperSlot>
        <Dropper />
        <svg width="14" height="14" viewBox="0 0 14 14"><circle cx="7" cy="7" r="7" fill="#0a0a0a" /></svg>
      </DropperSlot>
      <OpacityLabel>Deckkraft:</OpacityLabel>
      <Field $w={59} $h={22} $ml={8}>100 %<DownMark /></Field>
    </ColorHead>
    <ColorBody>
      <Row $h={16}>Zuletzt verwendet:</Row>
      <SwatchTools>
        <Select $w={139} $h={19}>
          <Gi w={14} h={12} d="M7 1.5L12.5 11h-11z" c="#eee" sw={1.6} fill="#111" />
          <SwatchName>Grautöne</SwatchName>
          <Updown />
        </Select>
        <GridIcon><Gi w={16} h={16} d="M2 2h5v5H2zM9 2h5v5H9zM2 9h5v5H2zM10 11.5h5M12.5 9v5" c="#ccc" /></GridIcon>
        <MiniSwatches>
          <svg width="13" height="14" viewBox="0 0 13 14"><rect width="13" height="14" fill="#fff" /><path d="M0 14L13 0" stroke="#d88" /></svg>
          <MiniSwatch $c="#2b2b2b" />
          <MiniSwatch $c="#999" />
          <MiniSwatch $c="#fff" />
        </MiniSwatches>
      </SwatchTools>
      <SwatchGrid>
        {greys.map(c => <Swatch key={c} $c={c} />)}
      </SwatchGrid>
      <Search><Gi w={12} h={12} d="M5 1a4 4 0 1 0 .01 0zM8 8l3 3" c="#aaa" /></Search>
    </ColorBody>
    <TabRow $h={20}>
      <PanelTab $on>Absatz</PanelTab>
      <PanelTab $ml={4}>Zeichen</PanelTab>
      <PanelTab $ml={3}>Textstile</PanelTab>
    </TabRow>
    <AlignBody>
      <AlignGroup $n={9} $w={27}>
        <AlignCell $on><AlignIcon kind="left" /></AlignCell>
        <AlignCell><AlignIcon kind="center" /></AlignCell>
        <AlignCell><AlignIcon kind="right" /></AlignCell>
        <AlignCell><AlignIcon kind="just" /></AlignCell>
        <AlignCell><AlignIcon kind="just" /></AlignCell>
        <AlignCell><AlignIcon kind="just" /></AlignCell>
        <AlignCell><AlignIcon kind="just" /></AlignCell>
        <AlignCell><Gi w={15} h={14} d={lines(7, 'right') + 'M14.5 1v12'} c="#d8d8d8" /></AlignCell>
        <AlignCell><Gi w={15} h={14} d={lines(7, 'left') + 'M14.5 1v12'} c="#d8d8d8" /></AlignCell>
      </AlignGroup>
      <StyleSelect>[Kein Stil]<StyleArrow><DownMark $flush /></StyleArrow></StyleSelect>
    </AlignBody>
    <ScrollArea>
      <ScrollContent>
        <SpacingSection />
        <JustifySection />
        <FlowSection />
        <NumberingSection />
      </ScrollContent>
      <ScrollTrack><ScrollThumb /></ScrollTrack>
    </ScrollArea>
  </LeftPanel>
);

const Right = () => (
  <RightPanel>
    <TabRow><PanelTab $on>Transformieren</PanelTab></TabRow>
    <TransformBody>
      <AnchorSlot><AnchorGrid /></AnchorSlot>
      <TransformGrid>
        <TfLabel>X:</TfLabel><Field $dim $w={60} $h={19}>0 mm</Field>
        <TfLabel>B:</TfLabel><Field $dim $w={60} $h={19}>0 mm</Field>
        <TfLabel>Y:</TfLabel><Field $dim $w={60} $h={19}>0 mm</Field>
        <TfLabel>H:</TfLabel><Field $dim $w={60} $h={19}>0 mm</Field>
        <TfLabel>R:</TfLabel><Field $dim $w={60} $h={19}>0 °<DownMark $dim /></Field>
        <TfLabel>N:</TfLabel><Field $dim $w={60} $h={19}>0 °<DownMark $dim /></Field>
      </TransformGrid>
      <ChainSlot><Chain /></ChainSlot>
    </TransformBody>
    <TabRow $h={22}>
      <PanelTab $on>Seiten</PanelTab>
      <MenuGlyph />
    </TabRow>
    <PagesBody>
      <SectionHead>
        <Tri />Master-Seiten
        <HeadIcons>
          <IconGap><Gi w={14} h={14} d="M2.5.5h9v13h-9zM4 3h6M4 5.5h6M4 8h6M4 10.5h6" c="#e8e8e8" /></IconGap>
          <Gi w={14} h={14} d="M4 1h9v10M1 3.5h9v10H1z" c="#777" />
          <Trash />
        </HeadIcons>
      </SectionHead>
      <PageRow $mt={4}><Thumb />Master A</PageRow>
      <SectionHead $mt={66}>
        <Tri />Seiten
        <HeadIcons>
          <BookmarkGap><Gi w={18} h={14} d="M6 2h6v10l-3-2-3 2zM0 3h4M0 6h4M0 9h4M14 3h4M14 6h4M14 9h4" c="#ddd" /></BookmarkGap>
          <IconGap><Gi w={14} h={14} d="M1.5 1.5h11v11h-11z" c="#f0f0f0" /></IconGap>
          <Gi w={14} h={14} d="M4 1h9v10M1 3.5h9v10H1z" c="#777" />
          <Trash />
        </HeadIcons>
      </SectionHead>
      <PageRow $mt={4}><Thumb $ml={31} />Seite 1</PageRow>
      <PageRow><Thumb $wide $sel />Seiten 2,3</PageRow>
      <PageRow><Thumb $wide />Seiten 4,5</PageRow>
      <PageRow><Thumb />Seite 6</PageRow>
    </PagesBody>
    <Divider />
    <TabRow $h={20}>
      <PanelTab $on>Ebenen</PanelTab>
      <MenuGlyph />
    </TabRow>
    <LayerControls>
      <LayerLabel>Deckkraft:</LayerLabel>
      <Field $dim $w={48} $h={20}>100 %<DownMark $dim /></Field>
      <Select $dim $w={128} $h={20} $ml={4}>Normal<Updown $dim /></Select>
      <FootSlot $ml={1}><FaCog size={13} color="#ccc" /></FootSlot>
      <FootSlot><FaLock size={13} color="#999" /></FootSlot>
    </LayerControls>
    <LayerRow>
      <LayerThumb />
      (Master A)
      <CheckBox $on $push><Check /></CheckBox>
    </LayerRow>
    <LayersSpace />
    <LayersFoot>
      <FootSlot $on><Gi w={16} h={14} d="M8 1l7 3-7 3-7-3zM1 7l7 3 7-3M1 10l7 3 7-3" c="#ccc" sw={1.2} /></FootSlot>
      <FootSlot $ml={76}>
        <svg width="14" height="12" viewBox="0 0 14 12"><rect width="14" height="12" fill="#ccc" /><circle cx="7" cy="6" r="3.5" fill="#3a3a3a" /></svg>
      </FootSlot>
      <FootSlot $ml={3}>
        <svg width="13" height="13" viewBox="0 0 13 13"><circle cx="6.5" cy="6.5" r="6" fill="#999" /><path d="M8 1L5 12a6 6 0 0 1 0-11z" fill="#ddd" /></svg>
      </FootSlot>
      <FootSlot $ml={1}><FxText>fx</FxText></FootSlot>
      <FootSlot $ml={74}><Gi w={12} h={14} d="M1 1h6l4 4v8H1zM7 1v4h4" c="#ccc" /></FootSlot>
      <FootSlot $ml={2}><Trash c="#bbb" /></FootSlot>
    </LayersFoot>
  </RightPanel>
);

const SetupDialog = () => (
  <Dialog>
    <DialogTitle>Layoutseite einrichten</DialogTitle>
    <ScopeRow>
      <RadioColumn>
        <RadioRow><Radio />Aktuelle Layoutseite</RadioRow>
        <RadioRow $mt={6}><Radio $on />Alle Layoutseiten</RadioRow>
        <RadioRow $mt={8}><Radio />Ausgewählte Layoutseiten</RadioRow>
      </RadioColumn>
      <PageList>
        <PageListRow $odd>Layoutseite 1 (Seite 1)</PageListRow>
        <PageListRow>Layoutseite 2 (Seiten 2,3)</PageListRow>
        <PageListRow $odd>Layoutseite 3 (Seiten 4,5)</PageListRow>
        <PageListRow>Layoutseite 4 (Seite 6)</PageListRow>
        <PageListRow $odd />
      </PageList>
    </ScopeRow>
    <DialogTabs>
      <DialogTab $sep>Abmessungen</DialogTab>
      <DialogTab>Skalierung</DialogTab>
      <DialogTab $on $ml={1}>Ränder</DialogTab>
    </DialogTabs>
    <DialogBody>
      <CheckRow $pl={0}><CheckBox $on><Check /></CheckBox>Inklusive Seitenränder</CheckRow>
      <FormRow $mt={12}>
        <PlainLabel $w={90}>Innen:</PlainLabel>
        <Field $w={74} $ml={8}>20 mm</Field>
        <PlainLabel $w={113}>Außen:</PlainLabel>
        <Field $w={74} $ml={10}>30 mm</Field>
      </FormRow>
      <FormRow $mt={7}>
        <PlainLabel $w={90}>Oben:</PlainLabel>
        <Field $focus $w={74} $ml={8}>15 mm</Field>
        <PlainLabel $w={113}>Unten:</PlainLabel>
        <Field $w={74} $ml={10}>10 mm</Field>
      </FormRow>
      <ChainFloat><Chain /></ChainFloat>
      <CursorFloat>
        <Gi w={13} h={19} d="M1 1v14l3.5-3 2.5 6 2.4-1-2.5-5.5H11z" c="#ddd" fill="#333" />
      </CursorFloat>
      <WideButton>Ränder aus Drucker übernehmen</WideButton>
      <DialogFoot>
        <DialogButton>Abbrechen</DialogButton>
        <DialogButton>OK</DialogButton>
      </DialogFoot>
    </DialogBody>
  </Dialog>
);

const App = () => (
  <Screen>
    <GlobalStyle />
    <MenuBar>
      <FaApple size={16} color="#eee" />
      <MenuItem $bold>Affinity Publisher</MenuItem>
      {menus.map(m => <MenuItem key={m}>{m}</MenuItem>)}
    </MenuBar>
    <TitleBar>
      <Lights><Light /><Light /><Light /></Lights>
      Affinity Publisher - &lt;Unbenannt&gt; [Geändert] (30.3%)
    </TitleBar>
    <TopBar />
    <ContextBar>
      <ContextLabel>Keine Auswahl</ContextLabel>
      <CtxButton $w={177} $ml={15}>Dokumenteinstellungen...</CtxButton>
      <CtxButton $w={168}>Layoutseite einrichten...</CtxButton>
      <CtxButton $w={120}>Einstellungen...</CtxButton>
    </ContextBar>
    <Main>
      <ToolIcons />
      <Left />
      <Center>
        <DocTabs>
          <DocTab $w={656}>mehrseitige-broschuere [M]</DocTab>
          <DocTab $on $w={649}>&lt;Unbenannt&gt; [M]</DocTab>
        </DocTabs>
        <TopRuler />
        <CanvasRow>
          <LeftRuler />
          <Canvas>
            <Page $x={754} $y={0} $w={385} $h={64} />
            <Page $x={370} $y={103} $w={769} $h={272} />
            <Page $x={370} $y={414} $w={769} $h={272}><Fold /></Page>
            <Page $x={370} $y={725} $w={384} $h={170} />
          </Canvas>
        </CanvasRow>
      </Center>
      <Right />
    </Main>
    <StatusBar>
      <StatusIcon><Gi w={14} h={12} d="M1.5 1v10M12 1L4 6l8 5z" c="#ddd" fill="#ddd" /></StatusIcon>
      <StatusIcon $ml={4}><Gi w={14} h={12} d="M11 1L3 6l8 5z" c="#ddd" fill="#ddd" /></StatusIcon>
      <StatusPage>2,3 von 6</StatusPage>
      <StatusIcon><Gi w={14} h={12} d="M3 1l8 5-8 5z" c="#ddd" fill="#ddd" /></StatusIcon>
      <StatusIcon $ml={4}><Gi w={14} h={12} d="M2 1l8 5-8 5zM12.5 1v10" c="#ddd" fill="#ddd" /></StatusIcon>
      <StatusIcon $ml={6}><Gi w={14} h={14} d="M2.5.5h9v13h-9zM4 3h6M4 5.5h6M4 8h6M4 10.5h6" c="#ddd" /></StatusIcon>
      <StatusHint><b>Ziehen</b> = Per Auswahlrahmen markieren. <b>Klick</b> auf Objekt = Objekt auswählen.</StatusHint>
    </StatusBar>
    <SetupDialog />
  </Screen>
);

export default App;
